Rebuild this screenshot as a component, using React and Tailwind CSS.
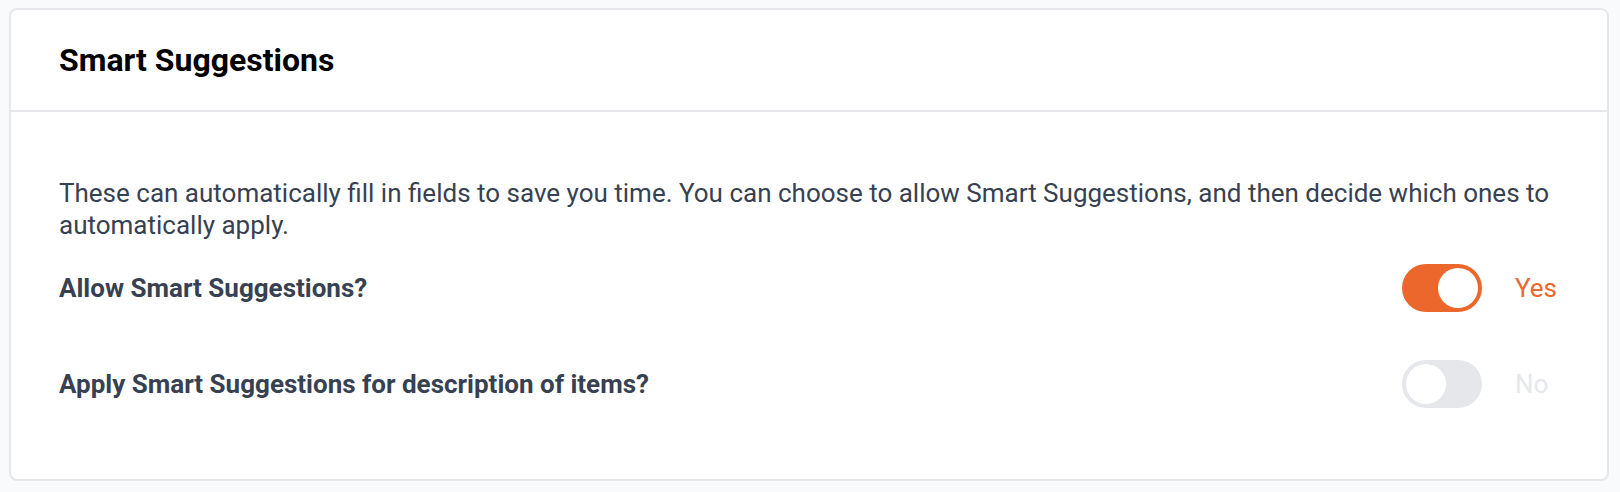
function Toggle({ on }) {
  return (
    <div
      className={`flex h-12 w-20 items-center rounded-full p-1 ${
        on ? 'justify-end bg-[#ec672c]' : 'justify-start bg-[#e5e7eb]'
      }`}
    >
      <div className="h-10 w-10 rounded-full bg-white" />
    </div>
  );
}

function SettingRow({ label, on, className }) {
  return (
    <div className={`flex h-12 items-center justify-between ${className}`}>
      <span className="text-[26px] font-bold leading-8 text-[#374151]">{label}</span>
      <div className="flex items-center gap-[33px]">
        <Toggle on={on} />
        <span
          className={`w-[44px] text-[26px] leading-8 ${
            on ? 'text-[#ec672c]' : 'text-[#e5e7eb]'
          }`}
        >
          {on ? 'Yes' : 'No'}
        </span>
      </div>
    </div>
  );
}

export default function App() {
  return (
    <div className="min-h-[492px] bg-[#f9fafb] pl-[9px] pt-2 font-['Roboto',sans-serif]">
      <div className="h-[473px] w-[1600px] rounded-lg border-2 border-[#e5e7eb] bg-white">
        <div className="flex h-[102px] items-center border-b-2 border-[#e5e7eb] px-12">
          <h2 className="text-[32px] font-bold leading-10 text-black">Smart Suggestions</h2>
        </div>
        <div className="px-12 pt-[65px]">
          <p className="text-[26px] leading-8 text-[#374151]">
            These can automatically fill in fields to save you time. You can choose to allow Smart
            Suggestions, and then decide which ones to automatically apply.
          </p>
          <SettingRow className="mt-[23px]" label="Allow Smart Suggestions?" on />
          <SettingRow className="mt-12" label="Apply Smart Suggestions for description of items?" on={false} />
        </div>
      </div>
    </div>
  );
}
